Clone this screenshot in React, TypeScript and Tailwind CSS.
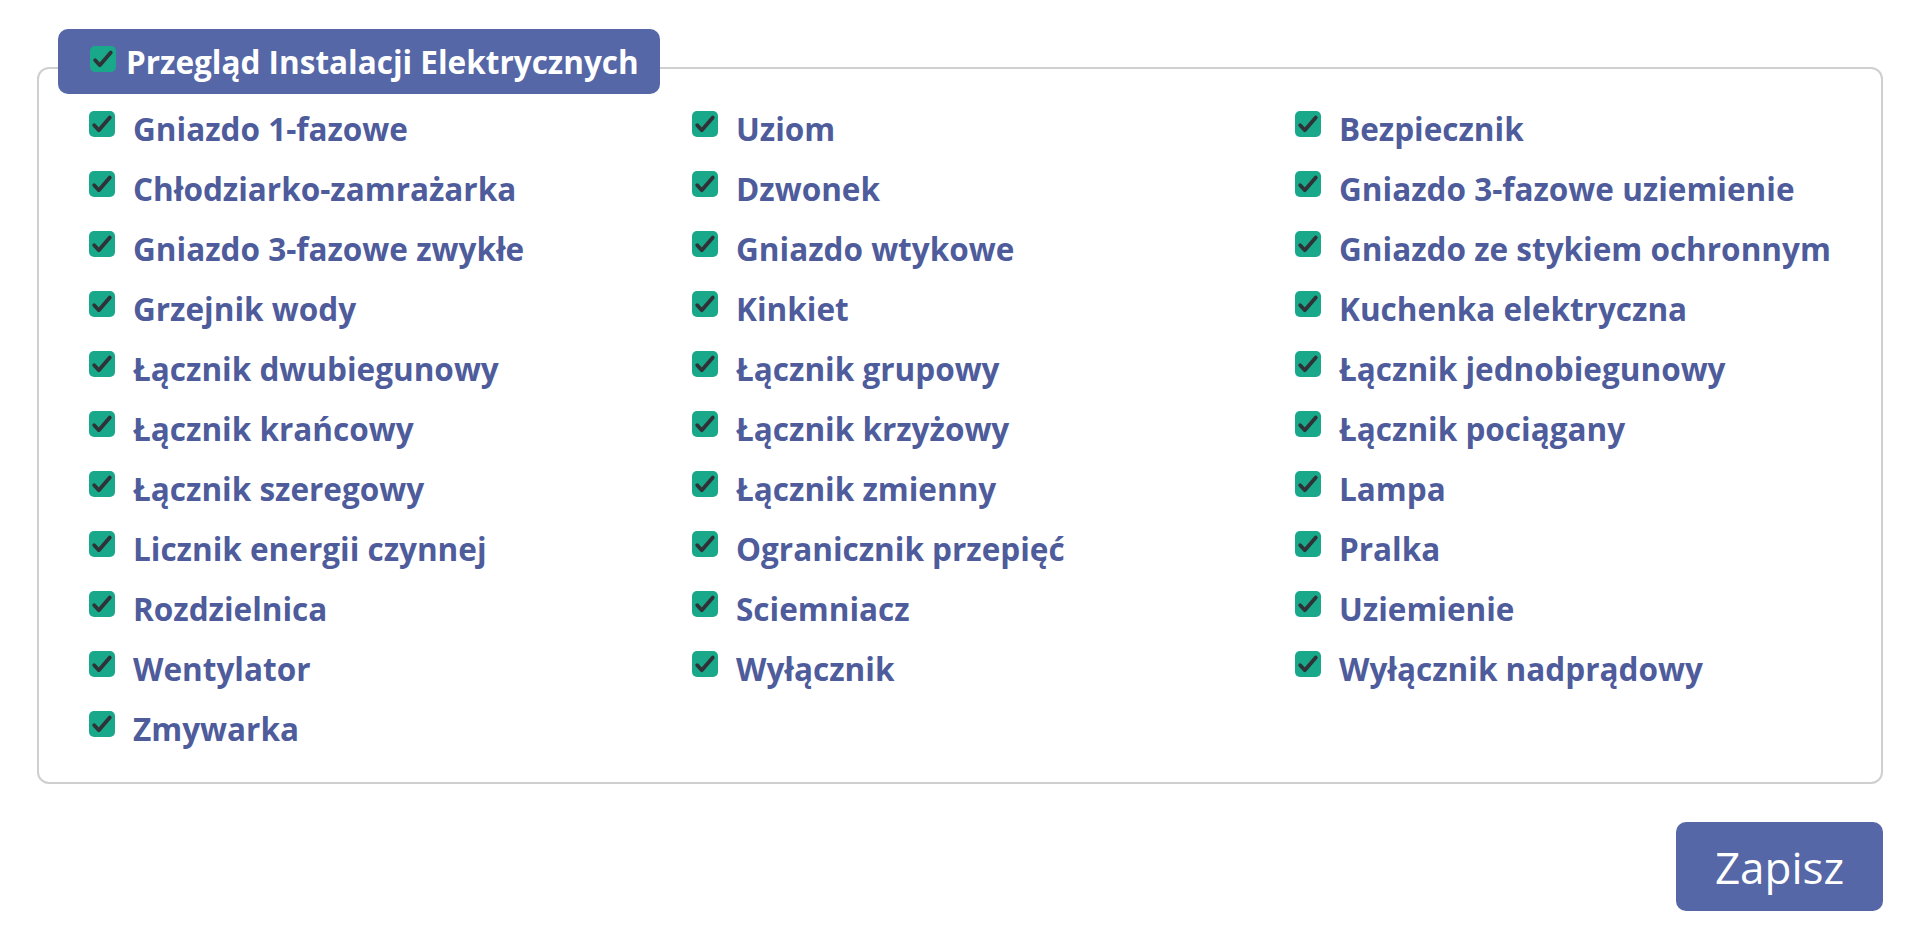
import React from "react";

const columns: string[][] = [
  [
    "Gniazdo 1-fazowe",
    "Chłodziarko-zamrażarka",
    "Gniazdo 3-fazowe zwykłe",
    "Grzejnik wody",
    "Łącznik dwubiegunowy",
    "Łącznik krańcowy",
    "Łącznik szeregowy",
    "Licznik energii czynnej",
    "Rozdzielnica",
    "Wentylator",
    "Zmywarka",
  ],
  [
    "Uziom",
    "Dzwonek",
    "Gniazdo wtykowe",
    "Kinkiet",
    "Łącznik grupowy",
    "Łącznik krzyżowy",
    "Łącznik zmienny",
    "Ogranicznik przepięć",
    "Sciemniacz",
    "Wyłącznik",
  ],
  [
    "Bezpiecznik",
    "Gniazdo 3-fazowe uziemienie",
    "Gniazdo ze stykiem ochronnym",
    "Kuchenka elektryczna",
    "Łącznik jednobiegunowy",
    "Łącznik pociągany",
    "Lampa",
    "Pralka",
    "Uziemienie",
    "Wyłącznik nadprądowy",
  ],
];

function Check() {
  return (
    <span className="flex h-[26px] w-[26px] shrink-0 items-center justify-center rounded-[5px] bg-[#19a98a]">
      <svg width="26" height="26" viewBox="0 0 26 26" fill="none">
        <path
          d="M5.2 14.2 L9.8 19.2 L20.8 6.6"
          stroke="#2f3237"
          strokeWidth="3.8"
          strokeLinecap="round"
          strokeLinejoin="round"
        />
      </svg>
    </span>
  );
}

function Item({ label }: { label: string }) {
  return (
    <label className="flex h-[60px] items-start gap-[18px]">
      <span className="mt-[12px]">
        <Check />
      </span>
      <span className="whitespace-nowrap text-[31.5px] font-bold leading-[60px] text-[#4e5c9c]">{label}</span>
    </label>
  );
}

export default function App() {
  return (
    <div className="min-h-screen bg-white pl-[37px] pr-[44px] pt-[29px] font-['Open_Sans',sans-serif]">
      <div className="relative z-10 ml-[21px] inline-flex h-[65px] items-center gap-[10px] rounded-[10px] bg-[#5567a6] pl-[32px] pr-[21px]">
        <span className="-mt-[6px]">
          <Check />
        </span>
        <span className="whitespace-nowrap text-[31.5px] font-bold leading-none text-white">
          Przegląd Instalacji Elektrycznych
        </span>
      </div>
      <div className="-mt-[27px] rounded-[12px] border-2 border-[#cfcfcf] pb-[23px] pl-[50px] pt-[30px]">
        <div className="grid grid-cols-[603px_603px_1fr]">
          {columns.map((col, i) => (
            <div key={i} className="flex flex-col">
              {col.map((label) => (
                <Item key={label} label={label} />
              ))}
            </div>
          ))}
        </div>
      </div>
      <div className="mt-[38px] flex justify-end">
        <button className="flex h-[89px] w-[207px] items-center justify-center rounded-[10px] bg-[#5567a6] text-[44px] font-normal text-white">
          Zapisz
        </button>
      </div>
    </div>
  );
}
